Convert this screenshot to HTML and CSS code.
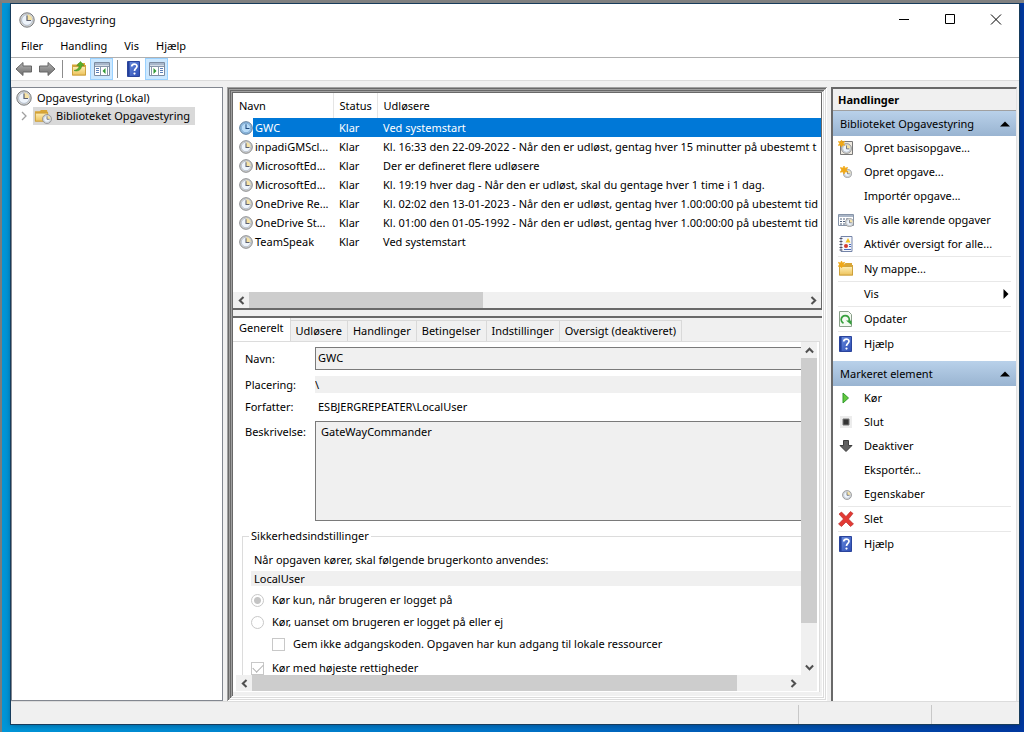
FILE: index.html
```html
<!DOCTYPE html>
<html lang="da">
<head>
<meta charset="utf-8">
<title>Opgavestyring</title>
<link rel="stylesheet" href="styles.css">
</head>
<body class="desktop">
<svg class="defs" aria-hidden="true">
  <defs>
    <linearGradient id="gold" x1="0" y1="0" x2="0" y2="1"><stop offset="0" stop-color="#ffeeb4"/><stop offset="1" stop-color="#edc35c"/></linearGradient>
    <linearGradient id="bluebook" x1="0" y1="0" x2="1" y2="1"><stop offset="0" stop-color="#6c8fe0"/><stop offset="1" stop-color="#2c4cb4"/></linearGradient>
    <linearGradient id="metal" x1="0" y1="0" x2="0" y2="1"><stop offset="0" stop-color="#b4b4b4"/><stop offset="1" stop-color="#6c6c6c"/></linearGradient>
    <symbol id="clock" viewBox="0 0 16 16">
      <circle cx="8" cy="8" r="7.2" fill="#d8d8d4" stroke="#77797d" stroke-width="1"/>
      <circle cx="8" cy="8" r="5.4" fill="#eef4fb" stroke="#a7b2c4" stroke-width=".8"/>
      <path d="M8 8V2.6A5.4 5.4 0 0 1 13.4 8z" fill="#f6e3a6"/>
      <path d="M8 3.6V8.5H12" fill="none" stroke="#5c6070" stroke-width="1.2"/>
    </symbol>
    <symbol id="clock-sel" viewBox="0 0 16 16">
      <circle cx="8" cy="8" r="7.2" fill="#9dc4e6" stroke="#43688c" stroke-width="1"/>
      <circle cx="8" cy="8" r="5.4" fill="#b9dcf8" stroke="#6f9fcb" stroke-width=".8"/>
      <path d="M8 3.6V8.5H12" fill="none" stroke="#204a7c" stroke-width="1.2"/>
    </symbol>
    <symbol id="folder" viewBox="0 0 16 16">
      <path d="M1 3.5h5l1.5-1.5H14v2h1v10.500H1z" fill="#d9a636"/>
      <path d="M1.500 5.500h13v8.500h-13z" fill="url(#gold)" stroke="#c79a35" stroke-width=".8"/>
    </symbol>
    <symbol id="help" viewBox="0 0 16 16">
      <path d="M1.500.500h12v15h-12z" fill="url(#bluebook)" stroke="#2b459c"/>
      <path d="M2 1h1.600v14H2z" fill="#24409b"/>
      <path d="M5.700 5.600C5.700 2.400 11 2.300 11 5.300c0 2-2.500 2.200-2.500 4.600" fill="none" stroke="#fff" stroke-width="1.700"/>
      <circle cx="8.500" cy="12.600" r="1.100" fill="#fff"/>
    </symbol>
    <symbol id="star" viewBox="0 0 8 8">
      <path d="M4 0l1 2.200L7.600 1.500 6.200 4l1.500 2-2.600-.3L4 8 3 5.700.3 6.200 1.800 4 .400 1.600 3 2.200z" fill="#f0a818" stroke="#f0a818" stroke-width=".8"/>
    </symbol>
    <symbol id="chev" viewBox="0 0 8 8"><path d="M2.200.800L5.500 4 2.200 7.200" fill="none" stroke="#505050" stroke-width="1.800"/></symbol>
  </defs>
</svg>

<div class="window">
  <header class="titlebar">
    <svg class="icon16"><use href="#clock"/></svg>
    <h1 class="title">Opgavestyring</h1>
    <div class="winbuttons">
      <button class="winbtn" aria-label="Minimer"><svg width="12" height="12"><path d="M1 5.500h10" stroke="#000"/></svg></button>
      <button class="winbtn" aria-label="Maksimer"><svg width="12" height="12"><path d="M1.500.500h9v9h-9z" fill="none" stroke="#000"/></svg></button>
      <button class="winbtn" aria-label="Luk"><svg width="12" height="12"><path d="M1 .500l10 10M11 .500L1 10.500" stroke="#000"/></svg></button>
    </div>
  </header>

  <nav class="menubar">
    <button class="menu">Filer</button>
    <button class="menu">Handling</button>
    <button class="menu">Vis</button>
    <button class="menu">Hjælp</button>
  </nav>

  <div class="toolbar">
    <button class="tool" aria-label="Tilbage"><svg class="arrow" viewBox="0 0 18 16"><path d="M1 8l7-6.500V5h8.500v6H8v3.500z" fill="url(#metal)" stroke="#666"/></svg></button>
    <button class="tool" aria-label="Frem"><svg class="arrow" viewBox="0 0 18 16"><path d="M17 8l-7-6.500V5H1.500v6H10v3.500z" fill="url(#metal)" stroke="#666"/></svg></button>
    <span class="divider"></span>
    <button class="tool" aria-label="Et niveau op"><svg class="icon16" viewBox="0 0 16 16"><use href="#folder"/><path d="M3 9.500C6.500 9 8 7 8.200 4.500H5.800L9.500.500 13 4.500h-2.300C10.500 8.500 7.500 11 3 9.500z" fill="#58b02c" stroke="#3d8a20" stroke-width=".5"/></svg></button>
    <button class="tool pressed" aria-label="Vis eller skjul konsoltræet"><svg class="icon16" viewBox="0 0 16 16"><path d="M.500 1.500h15v13H.500z" fill="#fff" stroke="#7d8ca0"/><path d="M1 2h14v2.500H1z" fill="#a9b8cc"/><path d="M1 5.500h14M6.500 5.500v9M13.500 5.500v9" stroke="#8796aa"/><path d="M11.500 7v6l-3-3z" fill="#2f9a34"/><path d="M2 7.500h3M2 9.500h3M2 11.500h3" stroke="#5b7fb8"/></svg></button>
    <span class="divider"></span>
    <button class="tool" aria-label="Hjælp"><svg class="icon16"><use href="#help"/></svg></button>
    <button class="tool pressed" aria-label="Vis eller skjul handlingsruden"><svg class="icon16" viewBox="0 0 16 16"><path d="M.500 1.500h15v13H.500z" fill="#fff" stroke="#7d8ca0"/><path d="M1 2h14v2.500H1z" fill="#a9b8cc"/><path d="M1 5.500h14M9.500 5.500v9M2.500 5.500v9" stroke="#8796aa"/><path d="M4.500 7v6l3-3z" fill="#2f9a34"/><path d="M11 7.500h3M11 9.500h3M11 11.500h3" stroke="#5b7fb8"/></svg></button>
  </div>

  <main class="content">
    <aside class="tree">
      <div class="node"><svg class="icon16"><use href="#clock"/></svg><span>Opgavestyring (Lokal)</span></div>
      <div class="node child">
        <svg class="expander" viewBox="0 0 8 10"><path d="M2 1l4 4-4 4" fill="none" stroke="#a0a0a0" stroke-width="1.300"/></svg>
        <span class="selected"><svg class="icon18" viewBox="0 0 18 16"><use href="#folder" width="15" height="15"/><svg x="8" y="6" width="10" height="10"><use href="#clock"/></svg></svg>Biblioteket Opgavestyring</span>
      </div>
    </aside>

    <section class="center">
      <div class="listpane">
        <div class="listview">
          <table class="tasks">
            <colgroup><col class="c-icon"><col class="c-name"><col class="c-status"><col></colgroup>
            <thead><tr><th colspan="2">Navn</th><th>Status</th><th>Udløsere</th></tr></thead>
            <tbody>
              <tr class="active"><td><svg class="icon14"><use href="#clock-sel"/></svg></td><td>GWC</td><td>Klar</td><td>Ved systemstart</td></tr>
              <tr><td><svg class="icon14"><use href="#clock"/></svg></td><td>inpadiGMScl...</td><td>Klar</td><td>Kl. 16:33 den 22-09-2022 - Når den er udløst, gentag hver 15 minutter på ubestemt t</td></tr>
              <tr><td><svg class="icon14"><use href="#clock"/></svg></td><td>MicrosoftEd...</td><td>Klar</td><td>Der er defineret flere udløsere</td></tr>
              <tr><td><svg class="icon14"><use href="#clock"/></svg></td><td>MicrosoftEd...</td><td>Klar</td><td>Kl. 19:19 hver dag - Når den er udløst, skal du gentage hver 1 time i 1 dag.</td></tr>
              <tr><td><svg class="icon14"><use href="#clock"/></svg></td><td>OneDrive Re...</td><td>Klar</td><td>Kl. 02:02 den 13-01-2023 - Når den er udløst, gentag hver 1.00:00:00 på ubestemt tid</td></tr>
              <tr><td><svg class="icon14"><use href="#clock"/></svg></td><td>OneDrive St...</td><td>Klar</td><td>Kl. 01:00 den 01-05-1992 - Når den er udløst, gentag hver 1.00:00:00 på ubestemt tid</td></tr>
              <tr><td><svg class="icon14"><use href="#clock"/></svg></td><td>TeamSpeak</td><td>Klar</td><td>Ved systemstart</td></tr>
            </tbody>
          </table>
        </div>
        <div class="hscroll">
          <button class="sbtn" aria-label="Rul til venstre"><svg class="chev flip"><use href="#chev"/></svg></button>
          <div class="track"><div class="thumb thumb-list"></div></div>
          <button class="sbtn" aria-label="Rul til højre"><svg class="chev"><use href="#chev"/></svg></button>
        </div>
      </div>

      <div class="details">
        <div class="tabs" role="tablist">
          <button class="tab current" role="tab" aria-selected="true">Generelt</button>
          <button class="tab" role="tab">Udløsere</button>
          <button class="tab" role="tab">Handlinger</button>
          <button class="tab" role="tab">Betingelser</button>
          <button class="tab" role="tab">Indstillinger</button>
          <button class="tab" role="tab">Oversigt (deaktiveret)</button>
        </div>
        <div class="panel">
          <div class="viewport">
            <form class="form">
              <label for="navn">Navn:</label>
              <input id="navn" class="field boxed" type="text" value="GWC" readonly>
              <label for="placering">Placering:</label>
              <input id="placering" class="field flat" type="text" value="\" readonly>
              <span class="lbl">Forfatter:</span>
              <span class="author">ESBJERGREPEATER\LocalUser</span>
              <label for="beskrivelse" class="toplabel">Beskrivelse:</label>
              <textarea id="beskrivelse" class="field memo" readonly>GateWayCommander</textarea>
            </form>
            <fieldset class="security">
              <legend>Sikkerhedsindstillinger</legend>
              <label for="konto" class="accountlabel">Når opgaven kører, skal følgende brugerkonto anvendes:</label>
              <input id="konto" class="account" type="text" value="LocalUser" readonly>
              <label class="option"><input class="radio" type="radio" name="logon" checked disabled>Kør kun, når brugeren er logget på</label>
              <label class="option"><input class="radio" type="radio" name="logon" disabled>Kør, uanset om brugeren er logget på eller ej</label>
              <label class="option nested"><input class="check" type="checkbox" disabled>Gem ikke adgangskoden. Opgaven har kun adgang til lokale ressourcer</label>
              <label class="option last"><input class="check" type="checkbox" checked disabled>Kør med højeste rettigheder</label>
            </fieldset>
          </div>
          <div class="vscroll">
            <button class="sbtn" aria-label="Rul op"><svg class="chev up"><use href="#chev"/></svg></button>
            <div class="vtrack"><div class="thumb thumb-v"></div></div>
            <button class="sbtn" aria-label="Rul ned"><svg class="chev down"><use href="#chev"/></svg></button>
          </div>
          <div class="hscroll form-scroll">
            <button class="sbtn" aria-label="Rul til venstre"><svg class="chev flip"><use href="#chev"/></svg></button>
            <div class="track"><div class="thumb thumb-form"></div></div>
            <button class="sbtn" aria-label="Rul til højre"><svg class="chev"><use href="#chev"/></svg></button>
          </div>
        </div>
      </div>
    </section>

    <aside class="actions">
      <h2 class="actions-title">Handlinger</h2>
      <button class="group">Biblioteket Opgavestyring<svg class="tri" viewBox="0 0 10 6"><path d="M0 5.500L5 .500l5 5z"/></svg></button>
      <div class="items">
        <button class="item"><svg class="icon16" viewBox="0 0 16 16"><path d="M2.500 1.500h12v13h-12z" fill="#eee9e0" stroke="#777"/><svg x="3" y="3" width="11" height="11"><use href="#clock"/></svg><use href="#star" width="7" height="7"/></svg>Opret basisopgave...</button>
        <button class="item"><svg class="icon16" viewBox="0 0 16 16"><svg x="5" y="5" width="9" height="9"><use href="#clock"/></svg><use href="#star" x="2" y="2" width="8" height="8"/></svg>Opret opgave...</button>
        <button class="item"><span class="icon16"></span>Importér opgave...</button>
        <button class="item"><svg class="icon16" viewBox="0 0 16 16"><path d="M.500 2.500h15v11H.500z" fill="#fff" stroke="#8794a8"/><path d="M1 3h14v2H1z" fill="#a9b5c6"/><path d="M2 7h2M5 7h2M8 7h2M2 9.500h2M5 9.500h2M2 12h2M5 12h2" stroke="#50627e"/><svg x="7" y="6" width="9" height="9"><use href="#clock"/></svg></svg>Vis alle kørende opgaver</button>
        <button class="item"><svg class="icon16" viewBox="0 0 16 16"><path d="M3 .500h11v15H3z" fill="#f6f8fd" stroke="#7484a8"/><path d="M1.500 2.500h3M1.500 5.500h3M1.500 8.500h3M1.500 11.500h3M1.500 14h3" stroke="#556"/><path d="M10 2l2.500 4.500h-5z" fill="#f2c01c"/><circle cx="8" cy="10" r="2" fill="#d43c30"/><path d="M6 13.500h7M11 8.500h2M11 10.500h2" stroke="#4c6cbc"/></svg>Aktivér oversigt for alle...</button>
        <hr>
        <button class="item"><svg class="icon16" viewBox="0 0 16 16"><use href="#folder"/><use href="#star" width="7" height="7"/></svg>Ny mappe...</button>
        <hr>
        <button class="item"><span class="icon16"></span>Vis<svg class="more" viewBox="0 0 6 10"><path d="M.500 0l5 5-5 5z"/></svg></button>
        <hr>
        <button class="item"><svg class="icon16" viewBox="0 0 16 16"><path d="M1.500.500h9l3 3v12h-12z" fill="#f4faf2" stroke="#8aa08a"/><path d="M5.500 12.200A4 4 0 1 1 11 10" fill="none" stroke="#35a03c" stroke-width="1.800"/><path d="M8 9.500h5.500v4.500z" fill="#35a03c"/></svg>Opdater</button>
        <hr>
        <button class="item"><svg class="icon16"><use href="#help"/></svg>Hjælp</button>
      </div>
      <button class="group">Markeret element<svg class="tri" viewBox="0 0 10 6"><path d="M0 5.500L5 .500l5 5z"/></svg></button>
      <div class="items">
        <button class="item"><svg class="icon16" viewBox="0 0 16 16"><path d="M5 3l5.500 5L5 13z" fill="#62c83c" stroke="#2f9a2c"/></svg>Kør</button>
        <button class="item"><svg class="icon16" viewBox="0 0 16 16"><path d="M2 2h12v12H2z" fill="#ececec"/><path d="M5 5h6v6H5z" fill="#333" stroke="#777"/></svg>Slut</button>
        <button class="item"><svg class="icon16" viewBox="0 0 16 16"><path d="M5.500 2.500h5v5h3.500L8 13.500 2 7.500h3.500z" fill="#606060" stroke="#3c3c3c"/></svg>Deaktiver</button>
        <button class="item"><span class="icon16"></span>Eksportér...</button>
        <button class="item"><svg class="icon16" viewBox="0 0 16 16"><svg x="4" y="4" width="10" height="10"><use href="#clock"/></svg></svg>Egenskaber</button>
        <hr>
        <button class="item"><svg class="icon16" viewBox="0 0 16 16"><path d="M1 3l2.500-2L8 5.500 12.500.500 15 2.500 10.500 8l5 5-3 2.500L8 11l-4.500 4.500L.500 13 5.500 8z" fill="#e23a34" stroke="#b0201e" stroke-width=".6"/></svg>Slet</button>
        <hr>
        <button class="item"><svg class="icon16"><use href="#help"/></svg>Hjælp</button>
      </div>
    </aside>
  </main>

  <footer class="statusbar"><span class="cell wide"></span><span class="cell mid"></span><span class="cell small"></span></footer>
</div>
</body>
</html>
```

FILE: styles.css
```css
* { box-sizing: border-box; }

.desktop {
  margin: 0;
  height: 100vh;
  display: flex;
  padding: 1px 5px 8px 8px;
  border-top: 3px solid #808080;
  border-left: 2px solid #7c7c7c;
  background: linear-gradient(90deg, #0096d8 0%, #0074c8 50%, #0038a0 100%);
  font: 11px/16px "Noto Sans", "Open Sans", sans-serif;
  color: #000;
  overflow: hidden;
}

.defs { position: absolute; width: 0; height: 0; }

button, input, textarea { font: inherit; color: inherit; }
button { border: 0; padding: 0; margin: 0; background: none; text-align: left; white-space: nowrap; }

.icon16 { width: 16px; height: 16px; flex: none; }
.icon14 { width: 14px; height: 14px; display: block; }
.icon18 { width: 18px; height: 16px; flex: none; }

.window {
  flex: 1;
  min-width: 0;
  display: flex;
  flex-direction: column;
  background: #f0f0f0;
  outline: 1px solid #173c5c;
  margin-left: 1px;
  box-shadow: 0 1px 6px #00204080;
}

.titlebar { display: flex; align-items: center; gap: 5px; height: 31px; padding-left: 8px; background: #fff; }
.title { flex: 1; margin: 0; font-size: 11px; font-weight: 400; }
.winbuttons { display: flex; }
.winbtn { width: 46px; height: 31px; display: grid; place-items: center; }

.menubar { display: flex; gap: 17px; height: 23px; padding: 0 10px 1px; background: #fff; border-bottom: 1px solid #b0b0b0; }
.menu { height: 22px; }

.toolbar { display: flex; align-items: center; height: 23px; padding-left: 1px; background: #fff; border-bottom: 1px solid #dcdcdc; }
.tool { width: 23px; height: 22px; display: grid; place-items: center; }
.tool.pressed { background: #cce8ff; border: 1px solid #99d1ff; }
.arrow { width: 18px; height: 16px; }
.divider { width: 1px; height: 18px; margin: 0 4px; background: #8c8c8c; }

.content { flex: 1; min-height: 0; display: flex; gap: 4px; padding: 6px 2px 0 0; }

.tree { width: 212px; flex: none; background: #fff; border: 1px solid #828790; padding: 0 4px; }
.node { display: flex; align-items: center; gap: 5px; height: 19px; white-space: nowrap; }
.child { height: 18px; gap: 5px; padding-left: 4px; }
.expander { width: 8px; height: 10px; }
.selected { display: flex; align-items: center; gap: 4px; height: 18px; padding: 0 5px 0 1px; background: #d9d9d9; }

.center {
  flex: 1;
  min-width: 0;
  display: flex;
  flex-direction: column;
  gap: 6px;
  padding: 6px 5px 6px 6px;
  box-shadow:
    inset 1px 1px #a0a0a0, inset -1px -1px #fff,
    inset 2px 2px #696969, inset -2px -2px #dcdcdc,
    inset 3px 3px #a0a0a0, inset -3px -3px #fff,
    inset 4px 4px #696969, inset -4px -4px #dcdcdc,
    inset 5px 5px #a0a0a0, inset -5px -5px #fff,
    inset 6px 6px #696969;
}

.listpane { flex: 218 1 0; min-height: 0; display: flex; flex-direction: column; background: #fff; border-right: 1px solid #696969; border-bottom: 2px solid #696969; }
.listview { flex: 1; min-height: 0; overflow: hidden; }
.tasks { width: 100%; table-layout: fixed; border-collapse: collapse; }
.c-icon { width: 20px; }
.c-name { width: 80px; }
.c-status { width: 44px; }
.tasks th { height: 25px; padding: 0 6px; font-weight: 400; text-align: left; border-right: 1px solid #e5e5e5; }
.tasks th:last-child { border-right: 0; }
.tasks td { height: 19px; padding: 0 0 0 6px; white-space: nowrap; overflow: hidden; }
.tasks td:nth-child(2) { padding-left: 2px; }
.active td { background: #0078d7; color: #fff; }
.active td:first-child { background: none; }

.hscroll { display: flex; height: 16px; background: #f0f0f0; }
.form-scroll { grid-column: 1 / -1; padding-right: 16px; }
.track { flex: 1; display: flex; }
.thumb { background: #cdcdcd; }
.thumb-list { width: 42%; }
.thumb-form { width: 91%; }
.sbtn { width: 16px; height: 16px; display: grid; place-items: center; flex: none; }
.chev { width: 9px; height: 9px; }
.flip { transform: rotate(180deg); }
.up { transform: rotate(-90deg); }
.down { transform: rotate(90deg); }

.details { flex: 378 1 0; min-height: 0; display: flex; flex-direction: column; border-top: 2px solid #696969; padding: 0 2px 3px 0; }
.tabs { display: flex; align-items: flex-end; height: 23px; }
.tab { height: 21px; padding: 0 5px 1px; border: 1px solid #d9d9d9; border-left: 0; border-bottom: 0; }
.tab.current { height: 23px; padding: 0 6px 3px; background: #fff; border-top: 0; }

.panel {
  flex: 1;
  min-height: 0;
  display: grid;
  grid-template: minmax(0, 1fr) 16px / minmax(0, 1fr) 16px;
  padding: 0 2px 1px 3px;
  background: #fff;
  border-top: 1px solid #dcdcdc;
  border-right: 1px solid #dcdcdc;
}
.viewport { overflow: hidden; padding: 5px 0 0 9px; }
.vscroll { display: flex; flex-direction: column; background: #f0f0f0; }
.vtrack { flex: 1; }
.thumb-v { height: 88%; }

.form { display: grid; grid-template-columns: 70px minmax(0, 1fr); align-items: center; row-gap: 6px; }
.field { display: block; width: 100%; margin: 0; border: 0; border-radius: 0; background: #f0f0f0; outline: 0; }
.boxed { height: 23px; padding: 0 2px 2px; border: 1px solid #7a7a7a; border-right: 0; }
.flat { height: 17px; padding: 0; }
.form label, .lbl { white-space: nowrap; }
.author { padding-left: 3px; }
.toplabel { align-self: start; padding-top: 3px; }
.memo { height: 100px; padding: 2px 5px; border: 1px solid #7a7a7a; border-right: 0; resize: none; }

.security { margin: 7px 0 0 -3px; padding: 8px 0 20px 8px; border: 1px solid #dcdcdc; border-right: 0; min-width: 0; }
.security legend { margin: 0 0 0 -2px; padding: 0 2px; }
.accountlabel { display: block; padding-left: 3px; margin-bottom: 3px; }
.account { display: block; width: 100%; height: 15px; padding: 0 3px; border: 0; background: #f0f0f0; outline: 0; }
.option { display: flex; align-items: center; gap: 8px; height: 22px; white-space: nowrap; }
.account + .option { margin-top: 3px; }
.nested { padding-left: 21px; }
.last { height: 26px; }
.radio, .check { appearance: none; width: 13px; height: 13px; margin: 0; border: 1px solid #c8c8c8; background: #fff; flex: none; }
.radio { border-radius: 50%; }
.radio:checked { background: radial-gradient(circle, #c4c4c4 3px, #fff 4px); }
.check:checked { display: grid; place-items: center; }
.check:checked::before { content: ""; width: 9px; height: 5px; margin-bottom: 3px; border-left: 1px solid #b0b0b0; border-bottom: 1px solid #b0b0b0; transform: rotate(-45deg); }

.actions { width: 186px; flex: none; background: #fff; border-top: 2px solid #696969; border-left: 2px solid #696969; border-right: 1px solid #e3e3e3; }
.actions-title { margin: 0; height: 22px; padding: 3px 5px; font-size: 11px; font-weight: 700; background: #f0f0f0; border-bottom: 1px solid #a0a0a0; }
.group { display: flex; align-items: center; justify-content: space-between; width: 100%; height: 25px; padding: 0 6px 0 7px; background: linear-gradient(#b9d1ea, #99b4d1); }
.tri { width: 10px; height: 6px; }
.items { padding: 0 5px; margin-bottom: 5px; }
.item { display: flex; align-items: center; gap: 10px; width: 100%; height: 24px; }
.more { width: 6px; height: 10px; margin-left: auto; margin-right: 2px; }
.items hr { height: 1px; margin: 0; border: 0; background: #e8e8e8; }

.statusbar { display: flex; height: 23px; padding-top: 3px; border-top: 1px solid #dcdcdc; }
.cell { border-right: 1px solid #c8c8c8; }
.wide { flex: 1; }
.mid { width: 133px; }
.small { width: 87px; border-right: 0; }
```
